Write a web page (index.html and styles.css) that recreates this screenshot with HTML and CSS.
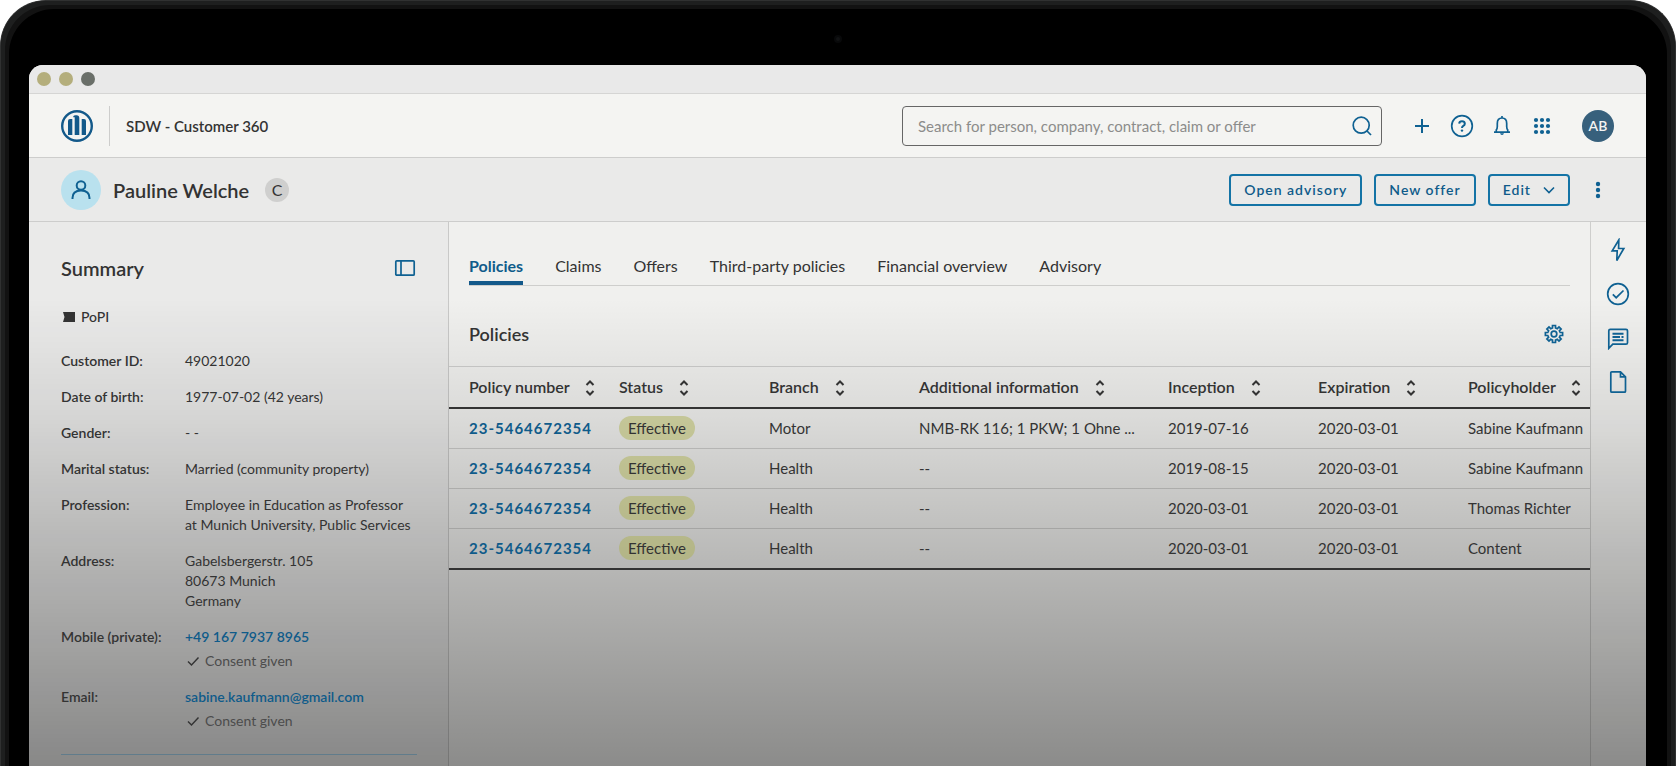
FILE: index.html
```html
<!DOCTYPE html>
<html lang="en">
<head>
    <meta charset="UTF-8">
    <meta name="viewport" content="width=device-width, initial-scale=1.0">
    <title>SDW - Customer 360</title>
    <link rel="stylesheet" href="styles.css">
</head>
<body>
    <div class="laptop">
        <div class="camera"></div>
        <div class="screen">
            <div class="titlebar">
                <span class="dot"></span>
                <span class="dot"></span>
                <span class="dot dot-dark"></span>
            </div>

            <header class="header">
                <a class="logo" href="#" aria-label="Home">
                    <svg width="32" height="32" viewBox="0 0 32 32">
                        <circle cx="16" cy="16" r="14.8" fill="none" stroke="#13598a" stroke-width="2.4"/>
                        <path fill="#13598a" d="M11.300 25H7V11Q7 9 9 9H11.300zM20.700 25H25V11Q25 9 23 9H20.700zM13.700 25V7.200H12.300V6.200Q13 5.300 14.500 5.300H16Q18.300 5.300 18.300 7.800V25z"/>
                    </svg>
                </a>
                <span class="app-name">SDW - Customer 360</span>
                <form class="search">
                    <input type="search" aria-label="Search" placeholder="Search for person, company, contract, claim or offer">
                    <button type="submit" class="icon-button" aria-label="Submit search">
                        <svg class="icon" viewBox="0 0 24 24"><circle cx="11.200" cy="11.200" r="8"/><path d="M17 17l4 4"/></svg>
                    </button>
                </form>
                <div class="header-icons">
                    <button class="icon-button" aria-label="Add">
                        <svg class="icon icon-thick" viewBox="0 0 24 24"><path d="M12 5v14M5 12h14"/></svg>
                    </button>
                    <button class="icon-button" aria-label="Help">
                        <svg class="icon" viewBox="0 0 24 24"><circle cx="12" cy="12" r="10.300"/><path stroke-width="2" d="M9.200 9.600Q9.400 7.300 12 7.300T14.800 9.700Q14.800 11 13.300 11.900Q12 12.700 12 14"/><circle class="filled" cx="12" cy="16.600" r="1.200"/></svg>
                    </button>
                    <button class="icon-button" aria-label="Notifications">
                        <svg class="icon" viewBox="0 0 24 24"><path d="M4 18.200h16M6.300 18V15.800Q7.300 14.800 7.300 12.500V9.500Q7.300 4 12 4T16.700 9.500V12.500Q16.700 14.800 17.700 15.800V18M12 4V2"/><path class="filled" d="M10 19.300h4q-.5 1.700-2 1.700t-2-1.700z"/></svg>
                    </button>
                    <button class="icon-button" aria-label="Applications">
                        <svg class="icon" viewBox="0 0 24 24"><g class="filled"><circle cx="6" cy="6" r="2.100"/><circle cx="12" cy="6" r="2.100"/><circle cx="18" cy="6" r="2.100"/><circle cx="6" cy="12" r="2.100"/><circle cx="12" cy="12" r="2.100"/><circle cx="18" cy="12" r="2.100"/><circle cx="6" cy="18" r="2.100"/><circle cx="12" cy="18" r="2.100"/><circle cx="18" cy="18" r="2.100"/></g></svg>
                    </button>
                </div>
                <button class="account">AB</button>
            </header>

            <div class="customer-bar">
                <span class="avatar">
                    <svg class="icon icon-thick" viewBox="0 0 24 24"><circle cx="12" cy="7.500" r="4.300"/><path d="M3.500 21V20Q3.500 12.500 12 12.500T20.500 20V21"/></svg>
                </span>
                <h1>Pauline Welche</h1>
                <span class="type-badge">C</span>
                <div class="actions">
                    <button class="button">Open advisory</button>
                    <button class="button">New offer</button>
                    <button class="button">Edit
                        <svg class="chevron" viewBox="0 0 12 8"><path d="M1 1.500l5 5 5-5"/></svg>
                    </button>
                </div>
                <button class="icon-button" aria-label="More actions">
                    <svg class="icon" viewBox="0 0 24 24"><g class="filled"><circle cx="12" cy="6" r="2.200"/><circle cx="12" cy="12" r="2.200"/><circle cx="12" cy="18" r="2.200"/></g></svg>
                </button>
            </div>

            <div class="content">
                <aside class="sidebar">
                    <div class="sidebar-head">
                        <h2>Summary</h2>
                        <button class="icon-button" aria-label="Collapse summary">
                            <svg class="icon" viewBox="0 0 24 24"><rect x="2.800" y="4.800" width="18.400" height="14.400" rx="1"/><path d="M8 5v14"/></svg>
                        </button>
                    </div>
                    <div class="flag">
                        <svg width="14" height="20" viewBox="0 0 14 20"><path fill="#333" d="M2 5H14v10H2l1.500-5z"/></svg>
                        PoPI
                    </div>
                    <dl class="details">
                        <dt>Customer ID:</dt>
                        <dd>49021020</dd>
                        <dt>Date of birth:</dt>
                        <dd>1977-07-02 (42 years)</dd>
                        <dt>Gender:</dt>
                        <dd>- -</dd>
                        <dt>Marital status:</dt>
                        <dd>Married (community property)</dd>
                        <dt>Profession:</dt>
                        <dd>Employee in Education as Professor<br>at Munich University, Public Services</dd>
                        <dt>Address:</dt>
                        <dd>Gabelsbergerstr. 105<br>80673 Munich<br>Germany</dd>
                        <dt>Mobile (private):</dt>
                        <dd>
                            <a href="tel:+4916779378965">+49 167 7937 8965</a>
                            <div class="consent"><svg viewBox="0 0 16 16"><path d="M3 8.500l3.500 3.500L13.500 4.500"/></svg>Consent given</div>
                        </dd>
                        <dt>Email:</dt>
                        <dd>
                            <a href="mailto:sabine.kaufmann@gmail.com">sabine.kaufmann@gmail.com</a>
                            <div class="consent"><svg viewBox="0 0 16 16"><path d="M3 8.500l3.500 3.500L13.500 4.500"/></svg>Consent given</div>
                        </dd>
                    </dl>
                    <hr>
                </aside>

                <main class="main">
                    <nav class="tabs">
                        <a class="active" href="#">Policies</a>
                        <a href="#">Claims</a>
                        <a href="#">Offers</a>
                        <a href="#">Third-party policies</a>
                        <a href="#">Financial overview</a>
                        <a href="#">Advisory</a>
                    </nav>
                    <div class="table-head">
                        <h3>Policies</h3>
                        <button class="icon-button" aria-label="Table settings">
                            <svg class="icon" viewBox="0 0 24 24"><circle cx="12" cy="12" r="2.800"/><path d="M10.500 3.500h3v2.400l1.800.8L17 5l2.100 2.100-1.700 1.700.8 1.700h2.400v3h-2.400l-.8 1.700 1.700 1.700L17 19l-1.700-1.700-1.800.8v2.400h-3v-2.400l-1.800-.8L7 19l-2.100-2.100 1.700-1.700-.8-1.700H3.400v-3h2.400l.8-1.700-1.700-1.700L7 5l1.700 1.700 1.800-.8z"/></svg>
                        </button>
                    </div>
                    <table class="policies">
                        <colgroup>
                            <col class="col-first">
                            <col class="col">
                            <col class="col">
                            <col class="col-wide">
                            <col class="col">
                            <col class="col">
                            <col class="col">
                        </colgroup>
                        <thead>
                            <tr>
                                <th>Policy number <svg class="sort" viewBox="0 0 10 16"><path d="M1.500 5L5 1.500 8.500 5M1.500 11L5 14.500 8.500 11"/></svg></th>
                                <th>Status <svg class="sort" viewBox="0 0 10 16"><path d="M1.500 5L5 1.500 8.500 5M1.500 11L5 14.500 8.500 11"/></svg></th>
                                <th>Branch <svg class="sort" viewBox="0 0 10 16"><path d="M1.500 5L5 1.500 8.500 5M1.500 11L5 14.500 8.500 11"/></svg></th>
                                <th>Additional information <svg class="sort" viewBox="0 0 10 16"><path d="M1.500 5L5 1.500 8.500 5M1.500 11L5 14.500 8.500 11"/></svg></th>
                                <th>Inception <svg class="sort" viewBox="0 0 10 16"><path d="M1.500 5L5 1.500 8.500 5M1.500 11L5 14.500 8.500 11"/></svg></th>
                                <th>Expiration <svg class="sort" viewBox="0 0 10 16"><path d="M1.500 5L5 1.500 8.500 5M1.500 11L5 14.500 8.500 11"/></svg></th>
                                <th>Policyholder <svg class="sort" viewBox="0 0 10 16"><path d="M1.500 5L5 1.500 8.500 5M1.500 11L5 14.500 8.500 11"/></svg></th>
                            </tr>
                        </thead>
                        <tbody>
                            <tr>
                                <td><a href="#">23-5464672354</a></td>
                                <td><span class="status">Effective</span></td>
                                <td>Motor</td>
                                <td>NMB-RK 116; 1 PKW; 1 Ohne ...</td>
                                <td>2019-07-16</td>
                                <td>2020-03-01</td>
                                <td>Sabine Kaufmann</td>
                            </tr>
                            <tr>
                                <td><a href="#">23-5464672354</a></td>
                                <td><span class="status">Effective</span></td>
                                <td>Health</td>
                                <td>--</td>
                                <td>2019-08-15</td>
                                <td>2020-03-01</td>
                                <td>Sabine Kaufmann</td>
                            </tr>
                            <tr>
                                <td><a href="#">23-5464672354</a></td>
                                <td><span class="status">Effective</span></td>
                                <td>Health</td>
                                <td>--</td>
                                <td>2020-03-01</td>
                                <td>2020-03-01</td>
                                <td>Thomas Richter</td>
                            </tr>
                            <tr>
                                <td><a href="#">23-5464672354</a></td>
                                <td><span class="status">Effective</span></td>
                                <td>Health</td>
                                <td>--</td>
                                <td>2020-03-01</td>
                                <td>2020-03-01</td>
                                <td>Content</td>
                            </tr>
                        </tbody>
                    </table>
                </main>

                <div class="rail">
                    <button class="icon-button" aria-label="Quick actions">
                        <svg class="icon" viewBox="0 0 24 24"><path d="M12.800 2L6.200 12.800h5L10.800 22.500 17.800 10.500h-5.200z"/></svg>
                    </button>
                    <button class="icon-button" aria-label="Tasks">
                        <svg class="icon" viewBox="0 0 24 24"><circle cx="12" cy="12" r="10.300"/><path d="M6.800 12.300l3.400 3.400L17.500 8.500"/></svg>
                    </button>
                    <button class="icon-button" aria-label="Messages">
                        <svg class="icon" viewBox="0 0 24 24"><path d="M2.800 22.300V4.800Q2.800 3.300 4.300 3.300H20Q21.500 3.300 21.500 4.800V16.700Q21.500 18.200 20 18.200H6.800z"/><path stroke-width="1.900" d="M6.500 7.800h11M6.500 11h7.500M15.500 11h2M6.500 14.200h11"/></svg>
                    </button>
                    <button class="icon-button" aria-label="Documents">
                        <svg class="icon" viewBox="0 0 24 24"><path d="M4.800 2.800Q4.800 1.800 5.800 1.800H14.500L19.500 6.800V21.200Q19.500 22.200 18.500 22.200H5.800Q4.800 22.200 4.800 21.200zM14.500 1.800V6.800H19.500"/></svg>
                    </button>
                </div>
            </div>
        </div>
    </div>
</body>
</html>
```
FILE: styles.css
```css
:root {
    --blue: #0f5b8a;
    --line: rgba(0, 0, 0, 0.14);
    --shade: linear-gradient(rgba(0, 0, 0, 0) 14%, rgba(0, 0, 0, 0.09) 36%, rgba(0, 0, 0, 0.23) 62%, rgba(0, 0, 0, 0.42));
}
* {
    box-sizing: border-box;
}
body {
    margin: 0;
    background: #fff;
    color: #333;
    font-family: Lato, "Open Sans", sans-serif;
    font-size: 16px;
    line-height: 24px;
}
h1, h2, h3, dl, dd {
    margin: 0;
}
h1, h2 {
    font-size: 20px;
    font-weight: 600;
    line-height: 32px;
}
h3 {
    font-size: 18px;
    font-weight: 600;
}
a {
    color: var(--blue);
    text-decoration: none;
}
button, input {
    font-family: inherit;
    font-size: inherit;
}

/* laptop frame */
.laptop {
    position: relative;
    display: flex;
    min-height: 100vh;
    padding: 64px 29px 0 28px;
    background: #000;
    border: 1px solid #303131;
    border-bottom: none;
    border-radius: 46px 46px 0 0;
    box-shadow: inset 4px 4px #1e1f1f, inset -4px 4px #1e1f1f, inset 8px 8px #121212, inset -8px 8px #121212;
}
.camera {
    position: absolute;
    top: 34px;
    left: 50%;
    width: 8px;
    height: 8px;
    margin-left: -4px;
    background: #111214;
    border: 2px solid #08090a;
    border-radius: 50%;
}
.screen {
    display: flex;
    flex: 1;
    flex-direction: column;
    min-width: 0;
    overflow: hidden;
    background: #f0f0ee;
    border-radius: 14px 14px 0 0;
}
.titlebar {
    display: flex;
    align-items: center;
    gap: 8px;
    height: 29px;
    padding: 0 8px;
    background: #e9e9e9;
    border-bottom: 1px solid #d5d5d4;
}
.dot {
    width: 14px;
    height: 14px;
    background: #b4ae7c;
    border-radius: 50%;
}
.dot-dark {
    background: #6a6f69;
}

/* icons */
.icon {
    display: block;
    width: 24px;
    height: 24px;
    fill: none;
    stroke: #0f6192;
    stroke-width: 1.7;
}
.icon-thick {
    stroke-width: 2;
}
.icon .filled {
    fill: #0f6192;
    stroke: none;
}
.icon-button {
    padding: 0;
    background: none;
    border: none;
    cursor: pointer;
}

/* header */
.header {
    display: flex;
    align-items: center;
    height: 64px;
    padding: 0 32px;
    background: #f4f4f2;
    border-bottom: 1px solid #cdcdcc;
}
.logo {
    display: flex;
    align-items: center;
    height: 40px;
    padding-right: 16px;
    border-right: 1px solid #cdcdcc;
}
.app-name {
    padding-left: 16px;
    font-size: 15px;
    font-weight: 600;
}
.search {
    display: flex;
    align-items: center;
    width: 480px;
    height: 40px;
    margin-left: auto;
    padding: 0 7px 0 15px;
    border: 1px solid #666;
    border-radius: 4px;
}
.search input {
    flex: 1;
    padding: 0;
    background: none;
    border: none;
    outline: none;
    font-size: 15px;
}
.search input::placeholder {
    color: #8c8c8b;
}
.header-icons {
    display: flex;
    gap: 16px;
    margin: 0 28px;
}
.account {
    width: 32px;
    height: 32px;
    padding: 0;
    background: #37607c;
    border: none;
    border-radius: 50%;
    color: #f4f4f2;
    font-size: 14px;
    font-weight: 600;
}

/* customer bar */
.customer-bar {
    display: flex;
    align-items: center;
    height: 64px;
    padding: 0 36px 0 32px;
    background: #eaeae9;
    border-bottom: 1px solid #cdcdcc;
}
.avatar {
    display: grid;
    place-items: center;
    width: 40px;
    height: 40px;
    margin-right: 12px;
    background: #b9e1ee;
    border-radius: 50%;
}
.type-badge {
    width: 24px;
    height: 24px;
    margin-left: 16px;
    background: #cfcfce;
    border-radius: 50%;
    text-align: center;
}
.actions {
    display: flex;
    gap: 12px;
    margin-left: auto;
    margin-right: 16px;
}
.button {
    display: flex;
    align-items: center;
    gap: 12px;
    height: 32px;
    padding: 0 13px;
    background: none;
    border: 2px solid #1474a6;
    border-radius: 4px;
    color: var(--blue);
    font-size: 14px;
    font-weight: 600;
    letter-spacing: 1px;
}
.chevron {
    width: 12px;
    height: 8px;
    fill: none;
    stroke: #0f6192;
    stroke-width: 1.6;
}

/* content, each column gets darker towards the bottom */
.content {
    display: flex;
    flex: 1;
}
.sidebar {
    flex: none;
    width: 420px;
    padding: 30px 31px 11px 32px;
    background: var(--shade) #eaeae9;
    border-right: 1px solid var(--line);
    font-size: 14px;
    line-height: 20px;
}
.sidebar-head {
    display: flex;
    align-items: center;
    justify-content: space-between;
}
.flag {
    display: flex;
    gap: 6px;
    margin: 23px 0 24px;
    font-weight: 500;
}
.details {
    display: grid;
    grid-template-columns: 124px 1fr;
    row-gap: 16px;
}
.details dt, .details a {
    font-weight: 600;
}
.details dd {
    white-space: nowrap;
}
.consent {
    display: flex;
    align-items: center;
    gap: 4px;
    margin-top: 4px;
    color: #4c4c4c;
}
.consent svg {
    width: 16px;
    height: 16px;
    fill: none;
    stroke: #333;
    stroke-width: 1.4;
}
.sidebar hr {
    height: 1px;
    margin: 23px 0 0;
    background: rgba(70, 115, 140, 0.6);
    border: none;
}

.main {
    flex: 1;
    min-width: 0;
    padding-top: 32px;
    overflow: hidden;
    background: var(--shade) #f0f0ee;
}
.tabs {
    display: flex;
    gap: 32px;
    margin: 0 20px;
    border-bottom: 1px solid var(--line);
}
.tabs a {
    padding-bottom: 3px;
    border-bottom: 4px solid transparent;
    color: #333;
}
.tabs .active {
    border-color: #13598a;
    color: var(--blue);
    font-weight: 700;
}
.table-head {
    display: flex;
    align-items: center;
    justify-content: space-between;
    height: 80px;
    padding: 16px 24px 0 20px;
}
.policies {
    width: 1169px;
    table-layout: fixed;
    border-collapse: separate;
    border-spacing: 0;
    border-top: 1px solid var(--line);
    border-bottom: 1px solid #333;
}
.policies .col-first {
    width: 170px;
}
.policies .col {
    width: 150px;
}
.policies .col-wide {
    width: 249px;
}
.policies th, .policies td {
    height: 40px;
    padding: 0;
    border-bottom: 1px solid var(--line);
    text-align: left;
    white-space: nowrap;
}
.policies td {
    padding-bottom: 1px;
    font-size: 15px;
}
.policies th:first-child, .policies td:first-child {
    padding-left: 20px;
}
.policies th {
    height: 42px;
    border-bottom: 2px solid #333;
    font-weight: 600;
}
.policies tr:last-child td {
    border-bottom-color: #333;
}
.policies td a {
    font-weight: 700;
    letter-spacing: 1px;
}
.sort {
    width: 10px;
    height: 16px;
    margin-left: 12px;
    fill: none;
    stroke: #333;
    stroke-width: 2;
    vertical-align: -3px;
}
.status {
    display: inline-block;
    padding: 0 9px;
    background: rgba(173, 178, 85, 0.5);
    border-radius: 12px;
}

.rail {
    display: flex;
    flex: none;
    flex-direction: column;
    align-items: center;
    gap: 20px;
    width: 56px;
    padding: 16px 2px 0 0;
    background: var(--shade) #f0f0ee;
    border-left: 1px solid var(--line);
}
```
